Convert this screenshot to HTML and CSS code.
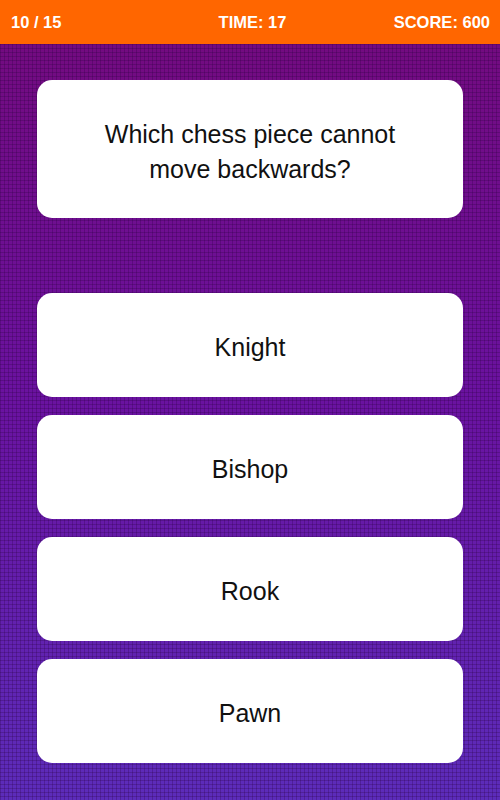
FILE: index.html
```html
<!DOCTYPE html>
<html lang="en">
<head>
    <meta charset="UTF-8">
    <meta name="viewport" content="width=device-width, initial-scale=1.0">
    <title>Quiz</title>
    <link rel="stylesheet" href="styles.css">
</head>
<body>

<header class="topBar">
    <span class="progress">10 / 15</span>
    <span class="timer">TIME: 17</span>
    <span class="score">SCORE: 600</span>
</header>

<main class="quiz">
    <div class="questionCard">
        <p>Which chess piece cannot<br>move backwards?</p>
    </div>

    <div class="answers">
        <button class="answer">Knight</button>
        <button class="answer">Bishop</button>
        <button class="answer">Rook</button>
        <button class="answer">Pawn</button>
    </div>
</main>

</body>
</html>
```

FILE: styles.css
```css
html, body {
    height: 100%;
}

body {
    font-family: "Liberation Sans", Arial, sans-serif;
    margin: 0;
    display: flex;
    flex-direction: column;
    background-color: #661490;
    background-image:
        linear-gradient(rgba(40, 0, 60, 0.25) 1px, transparent 1px),
        linear-gradient(90deg, rgba(40, 0, 60, 0.25) 1px, transparent 1px),
        linear-gradient(to bottom, #740a7c 0%, #6a12a0 50%, #5c2cba 100%);
    background-size: 4px 4px, 4px 4px, 100% 100%;
}

.topBar {
    height: 44px;
    flex-shrink: 0;
    background-color: #ff6600;
    color: #ffffff;
    font-weight: bold;
    font-size: 16.5px;
    padding: 0 10px 0 11px;
    display: grid;
    grid-template-columns: 1fr auto 1fr;
    align-items: center;
}

.timer {
    margin-left: 4px;
}

.score {
    text-align: right;
}

.quiz {
    padding: 36px 37px 0 37px;
    display: flex;
    flex-direction: column;
}

.questionCard {
    background-color: #ffffff;
    border-radius: 15px;
    height: 138px;
    box-sizing: border-box;
    padding-top: 6px;
    display: flex;
    align-items: center;
    justify-content: center;
    text-align: center;
}

.questionCard p {
    margin: 0;
    font-size: 25px;
    line-height: 35px;
    color: #111111;
}

.answers {
    margin-top: 75px;
    display: flex;
    flex-direction: column;
    gap: 18px;
}

.answer {
    height: 104px;
    border: none;
    border-radius: 15px;
    background-color: #ffffff;
    font-family: "Liberation Sans", Arial, sans-serif;
    font-size: 25px;
    color: #111111;
    cursor: pointer;
    padding: 4px 0 0 0;
}
```
